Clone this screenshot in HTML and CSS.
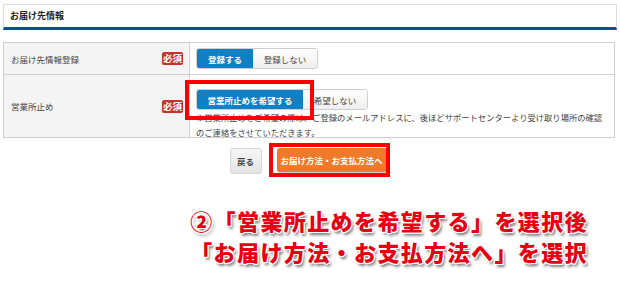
FILE: index.html
```html
<!DOCTYPE html>
<html lang="ja">
<head>
<meta charset="utf-8">
<link rel="stylesheet" href="styles.css">
</head>
<body>
<div class="page">
  <div class="section-head">お届け先情報</div>

  <div class="form">
    <div class="row row-1">
      <div class="label"><span>お届け先情報登録</span><span class="req">必須</span></div>
      <div class="value">
        <div class="toggle">
          <span class="opt on w56">登録する</span><span class="opt w64">登録しない</span>
        </div>
      </div>
    </div>
    <div class="row row-2">
      <div class="label"><span>営業所止め</span><span class="req">必須</span></div>
      <div class="value">
        <div class="toggle">
          <span class="opt on w106">営業所止めを希望する</span><span class="opt w64">希望しない</span>
        </div>
        <p class="note">※営業所止めをご希望の際は、ご登録のメールアドレスに、後ほどサポートセンターより受け取り場所の確認<br>のご連絡をさせていただきます。</p>
      </div>
    </div>
  </div>

  <div class="actions">
    <span class="btn back">戻る</span>
    <span class="btn next">お届け方法・お支払方法へ</span>
  </div>

  <div class="callout">
    <div>②「営業所止めを希望する」を選択後</div>
    <div>「お届け方法・お支払方法へ」を選択</div>
  </div>

  <div class="mark mark-1"></div>
  <div class="mark mark-2"></div>
</div>
</body>
</html>
```

FILE: styles.css
```css
html, body {
  margin: 0;
  padding: 0;
  background: #fff;
}
body {
  font-family: "Noto Sans CJK JP", "Noto Sans", sans-serif;
  color: #333;
}
.page {
  position: relative;
  width: 620px;
  height: 300px;
  overflow: hidden;
}
.section-head {
  margin: 4px 3px 0;
  height: 22px;
  border: 1px solid #dcdcdc;
  border-bottom: 3px solid #0b4c9c;
  box-sizing: content-box;
  font-size: 9px;
  font-weight: bold;
  line-height: 22px;
  padding-left: 6px;
  color: #222;
}
.form {
  margin: 12px 5px 0 3px;
  border: 1px solid #cfcfcf;
}
.row {
  display: grid;
  grid-template-columns: 186px 1fr;
}
.row-1 { height: 31px; border-bottom: 1px solid #cfcfcf; }
.row-2 { height: 62px; }
.label {
  background: #f4f4f4;
  border-right: 1px solid #cfcfcf;
  display: flex;
  align-items: center;
  justify-content: space-between;
  padding: 0 6px 0 7px;
  font-size: 8.5px;
  color: #444;
}
.req {
  background: #c3322b;
  color: #fff;
  font-size: 9.5px;
  font-weight: bold;
  line-height: 13px;
  height: 13px;
  padding: 0 1px;
  border-radius: 2px;
}
.value {
  padding-left: 6px;
  overflow: hidden;
}
.row-1 .value {
  display: flex;
  align-items: center;
}
.row-2 .value {
  padding-top: 14px;
}
.toggle {
  display: flex;
  width: max-content;
  border: 1px solid #cfcfcf;
  border-radius: 3px;
  overflow: hidden;
  height: 19px;
}
.opt {
  display: flex;
  align-items: center;
  justify-content: center;
  font-size: 8.5px;
  background: linear-gradient(#fff, #eeeeee);
  color: #444;
}
.opt.on {
  background: #0f80c6;
  color: #fff;
  font-weight: bold;
}
.w56 { width: 56px; }
.w64 { width: 64px; }
.w106 { width: 106px; }
.note {
  margin: 0;
  font-size: 8.3px;
  line-height: 15px;
  color: #444;
  white-space: nowrap;
}
.actions {
  display: flex;
  justify-content: center;
  gap: 15px;
  margin-top: 10px;
  padding-right: 4px;
}
.btn {
  display: flex;
  align-items: center;
  justify-content: center;
  height: 24px;
  border-radius: 3px;
  font-size: 8.5px;
  font-weight: bold;
}
.back {
  width: 30px;
  background: linear-gradient(#f6f6f6, #e4e4e4);
  border: 1px solid #d6d6d6;
  color: #444;
}
.next {
  width: 110px;
  background: #f07a2a;
  color: #fff;
  box-shadow: 0 1px 1px rgba(0,0,0,0.2);
}
.callout {
  margin-top: 31px;
  padding-right: 32px;
  text-align: right;
  font-size: 22px;
  font-weight: 900;
  line-height: 31px;
  color: #e60012;
  letter-spacing: 1.4px;
  text-shadow:
    1px 0 0 #fff, -1px 0 0 #fff, 0 1px 0 #fff, 0 -1px 0 #fff,
    1px 1px 0 #fff, -1px -1px 0 #fff, 1px -1px 0 #fff, -1px 1px 0 #fff,
    2px 3px 3px rgba(0,0,0,0.55);
}
.mark {
  position: absolute;
  border: 4px solid #ff0000;
  box-sizing: border-box;
}
.mark-1 { left: 185px; top: 80px; width: 129px; height: 40px; }
.mark-2 { left: 269px; top: 143px; width: 121px; height: 34px; }
```
